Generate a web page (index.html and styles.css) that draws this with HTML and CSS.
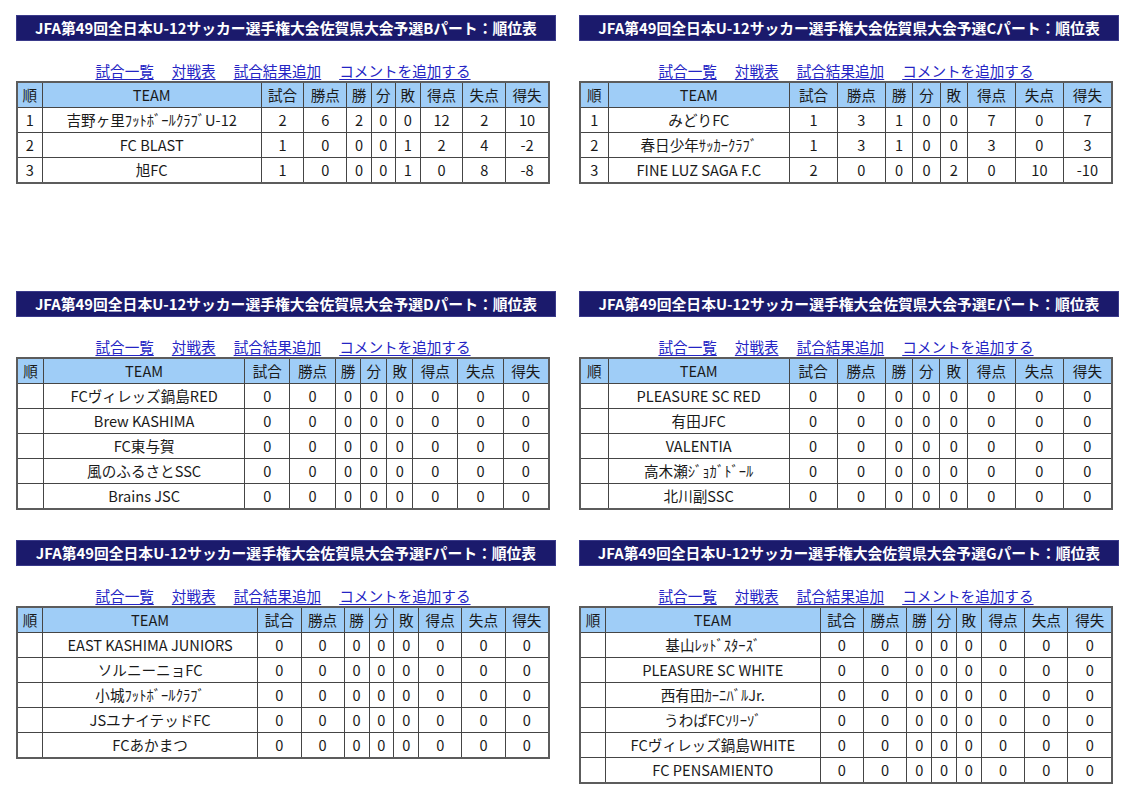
FILE: index.html
```html
<!DOCTYPE html>
<html lang="ja">
<head>
<meta charset="utf-8">
<link rel="stylesheet" href="styles.css">
</head>
<body>
<div class="page">

<section class="block block-first">
  <h2 class="title">JFA第49回全日本U-12サッカー選手権大会佐賀県大会予選Bパート：順位表</h2>
  <nav class="links"><a href="#">試合一覧</a><a href="#">対戦表</a><a href="#">試合結果追加</a><a href="#">コメントを追加する</a></nav>
  <table class="standings">
    <thead><tr><th>順</th><th class="team">TEAM</th><th>試合</th><th>勝点</th><th>勝</th><th>分</th><th>敗</th><th>得点</th><th>失点</th><th>得失</th></tr></thead>
    <tbody>
      <tr><td>1</td><td>吉野ヶ里ﾌｯﾄﾎﾞｰﾙｸﾗﾌﾞU-12</td><td>2</td><td>6</td><td>2</td><td>0</td><td>0</td><td>12</td><td>2</td><td>10</td></tr>
      <tr><td>2</td><td>FC BLAST</td><td>1</td><td>0</td><td>0</td><td>0</td><td>1</td><td>2</td><td>4</td><td>-2</td></tr>
      <tr><td>3</td><td>旭FC</td><td>1</td><td>0</td><td>0</td><td>0</td><td>1</td><td>0</td><td>8</td><td>-8</td></tr>
    </tbody>
  </table>
</section>

<section class="block block-first">
  <h2 class="title">JFA第49回全日本U-12サッカー選手権大会佐賀県大会予選Cパート：順位表</h2>
  <nav class="links"><a href="#">試合一覧</a><a href="#">対戦表</a><a href="#">試合結果追加</a><a href="#">コメントを追加する</a></nav>
  <table class="standings">
    <thead><tr><th>順</th><th class="team">TEAM</th><th>試合</th><th>勝点</th><th>勝</th><th>分</th><th>敗</th><th>得点</th><th>失点</th><th>得失</th></tr></thead>
    <tbody>
      <tr><td>1</td><td>みどりFC</td><td>1</td><td>3</td><td>1</td><td>0</td><td>0</td><td>7</td><td>0</td><td>7</td></tr>
      <tr><td>2</td><td>春日少年ｻｯｶｰｸﾗﾌﾞ</td><td>1</td><td>3</td><td>1</td><td>0</td><td>0</td><td>3</td><td>0</td><td>3</td></tr>
      <tr><td>3</td><td>FINE LUZ SAGA F.C</td><td>2</td><td>0</td><td>0</td><td>0</td><td>2</td><td>0</td><td>10</td><td>-10</td></tr>
    </tbody>
  </table>
</section>

<section class="block">
  <h2 class="title">JFA第49回全日本U-12サッカー選手権大会佐賀県大会予選Dパート：順位表</h2>
  <nav class="links"><a href="#">試合一覧</a><a href="#">対戦表</a><a href="#">試合結果追加</a><a href="#">コメントを追加する</a></nav>
  <table class="standings">
    <thead><tr><th>順</th><th class="team">TEAM</th><th>試合</th><th>勝点</th><th>勝</th><th>分</th><th>敗</th><th>得点</th><th>失点</th><th>得失</th></tr></thead>
    <tbody>
      <tr><td></td><td>FCヴィレッズ鍋島RED</td><td>0</td><td>0</td><td>0</td><td>0</td><td>0</td><td>0</td><td>0</td><td>0</td></tr>
      <tr><td></td><td>Brew KASHIMA</td><td>0</td><td>0</td><td>0</td><td>0</td><td>0</td><td>0</td><td>0</td><td>0</td></tr>
      <tr><td></td><td>FC東与賀</td><td>0</td><td>0</td><td>0</td><td>0</td><td>0</td><td>0</td><td>0</td><td>0</td></tr>
      <tr><td></td><td>風のふるさとSSC</td><td>0</td><td>0</td><td>0</td><td>0</td><td>0</td><td>0</td><td>0</td><td>0</td></tr>
      <tr><td></td><td>Brains JSC</td><td>0</td><td>0</td><td>0</td><td>0</td><td>0</td><td>0</td><td>0</td><td>0</td></tr>
    </tbody>
  </table>
</section>

<section class="block">
  <h2 class="title">JFA第49回全日本U-12サッカー選手権大会佐賀県大会予選Eパート：順位表</h2>
  <nav class="links"><a href="#">試合一覧</a><a href="#">対戦表</a><a href="#">試合結果追加</a><a href="#">コメントを追加する</a></nav>
  <table class="standings">
    <thead><tr><th>順</th><th class="team">TEAM</th><th>試合</th><th>勝点</th><th>勝</th><th>分</th><th>敗</th><th>得点</th><th>失点</th><th>得失</th></tr></thead>
    <tbody>
      <tr><td></td><td>PLEASURE SC RED</td><td>0</td><td>0</td><td>0</td><td>0</td><td>0</td><td>0</td><td>0</td><td>0</td></tr>
      <tr><td></td><td>有田JFC</td><td>0</td><td>0</td><td>0</td><td>0</td><td>0</td><td>0</td><td>0</td><td>0</td></tr>
      <tr><td></td><td>VALENTIA</td><td>0</td><td>0</td><td>0</td><td>0</td><td>0</td><td>0</td><td>0</td><td>0</td></tr>
      <tr><td></td><td>高木瀬ｼﾞｮｶﾞﾄﾞｰﾙ</td><td>0</td><td>0</td><td>0</td><td>0</td><td>0</td><td>0</td><td>0</td><td>0</td></tr>
      <tr><td></td><td>北川副SSC</td><td>0</td><td>0</td><td>0</td><td>0</td><td>0</td><td>0</td><td>0</td><td>0</td></tr>
    </tbody>
  </table>
</section>

<section class="block">
  <h2 class="title">JFA第49回全日本U-12サッカー選手権大会佐賀県大会予選Fパート：順位表</h2>
  <nav class="links"><a href="#">試合一覧</a><a href="#">対戦表</a><a href="#">試合結果追加</a><a href="#">コメントを追加する</a></nav>
  <table class="standings">
    <thead><tr><th>順</th><th class="team">TEAM</th><th>試合</th><th>勝点</th><th>勝</th><th>分</th><th>敗</th><th>得点</th><th>失点</th><th>得失</th></tr></thead>
    <tbody>
      <tr><td></td><td>EAST KASHIMA JUNIORS</td><td>0</td><td>0</td><td>0</td><td>0</td><td>0</td><td>0</td><td>0</td><td>0</td></tr>
      <tr><td></td><td>ソルニーニョFC</td><td>0</td><td>0</td><td>0</td><td>0</td><td>0</td><td>0</td><td>0</td><td>0</td></tr>
      <tr><td></td><td>小城ﾌｯﾄﾎﾞｰﾙｸﾗﾌﾞ</td><td>0</td><td>0</td><td>0</td><td>0</td><td>0</td><td>0</td><td>0</td><td>0</td></tr>
      <tr><td></td><td>JSユナイテッドFC</td><td>0</td><td>0</td><td>0</td><td>0</td><td>0</td><td>0</td><td>0</td><td>0</td></tr>
      <tr><td></td><td>FCあかまつ</td><td>0</td><td>0</td><td>0</td><td>0</td><td>0</td><td>0</td><td>0</td><td>0</td></tr>
    </tbody>
  </table>
</section>

<section class="block">
  <h2 class="title">JFA第49回全日本U-12サッカー選手権大会佐賀県大会予選Gパート：順位表</h2>
  <nav class="links"><a href="#">試合一覧</a><a href="#">対戦表</a><a href="#">試合結果追加</a><a href="#">コメントを追加する</a></nav>
  <table class="standings">
    <thead><tr><th>順</th><th class="team">TEAM</th><th>試合</th><th>勝点</th><th>勝</th><th>分</th><th>敗</th><th>得点</th><th>失点</th><th>得失</th></tr></thead>
    <tbody>
      <tr><td></td><td>基山ﾚｯﾄﾞｽﾀｰｽﾞ</td><td>0</td><td>0</td><td>0</td><td>0</td><td>0</td><td>0</td><td>0</td><td>0</td></tr>
      <tr><td></td><td>PLEASURE SC WHITE</td><td>0</td><td>0</td><td>0</td><td>0</td><td>0</td><td>0</td><td>0</td><td>0</td></tr>
      <tr><td></td><td>西有田ｶｰﾆﾊﾞﾙJr.</td><td>0</td><td>0</td><td>0</td><td>0</td><td>0</td><td>0</td><td>0</td><td>0</td></tr>
      <tr><td></td><td>うわばFCｿﾘｰｿﾞ</td><td>0</td><td>0</td><td>0</td><td>0</td><td>0</td><td>0</td><td>0</td><td>0</td></tr>
      <tr><td></td><td>FCヴィレッズ鍋島WHITE</td><td>0</td><td>0</td><td>0</td><td>0</td><td>0</td><td>0</td><td>0</td><td>0</td></tr>
      <tr><td></td><td>FC PENSAMIENTO</td><td>0</td><td>0</td><td>0</td><td>0</td><td>0</td><td>0</td><td>0</td><td>0</td></tr>
    </tbody>
  </table>
</section>

</div>
</body>
</html>
```

FILE: styles.css
```css
html, body {
  margin: 0;
  padding: 0;
  background: #ffffff;
}

body {
  font-family: "Noto Sans CJK JP", "Noto Sans", sans-serif;
  color: #1a1a1a;
  font-size: 14.6px;
}

.page {
  display: grid;
  grid-template-columns: 540px 540px;
  column-gap: 23px;
  row-gap: 30px;
  padding: 15px 0 0 16px;
  align-items: start;
}

.block {
  display: flex;
  flex-direction: column;
  align-items: flex-start;
}

.block-first {
  min-height: 246px;
}

.title {
  box-sizing: border-box;
  width: 540px;
  height: 26px;
  margin: 0;
  background: #1b1a6c;
  border: 1px solid #3a3a8a;
  color: #ffffff;
  font-size: 14.8px;
  font-weight: 700;
  line-height: 23px;
  text-align: center;
}

.links {
  width: 534px;
  display: flex;
  justify-content: center;
  gap: 18px;
  margin-top: 19px;
  height: 21px;
  line-height: 21px;
  font-size: 14.6px;
}

.links a {
  color: #2424c4;
  text-decoration: underline;
  text-underline-offset: 2px;
}

.standings {
  width: 534px;
  border-collapse: collapse;
  border: 2px solid #5c5c5c;
  margin-top: 0;
}

.standings th,
.standings td {
  border: 1px solid #454545;
  height: 24px;
  padding: 0 2px;
  text-align: center;
  font-size: 14.6px;
  line-height: 18px;
  white-space: nowrap;
}

.standings th {
  background: #9fcdf7;
  font-weight: 400;
  color: #1a1a1a;
}

.standings td {
  background: #ffffff;
}
```
